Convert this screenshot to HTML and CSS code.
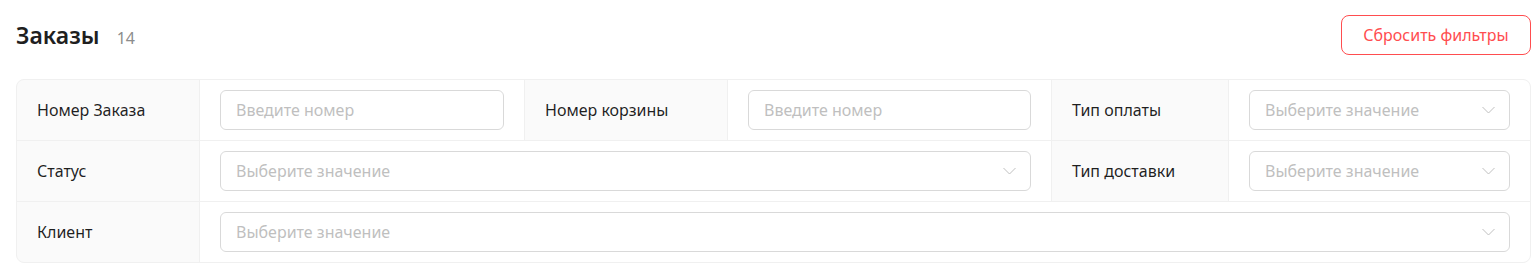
FILE: index.html
```html
<!DOCTYPE html>
<html lang="ru">
<head>
    <meta charset="UTF-8">
    <meta name="viewport" content="width=device-width, initial-scale=1.0">
    <title>Заказы</title>
    <link rel="stylesheet" href="styles.css">
</head>
<body>
    <div class="page">
        <div class="header">
            <h1 class="title">Заказы <span class="count">14</span></h1>
            <button class="reset-btn">Сбросить фильтры</button>
        </div>

        <div class="filters">
            <div class="label">Номер Заказа</div>
            <div class="field"><div class="input placeholder">Введите номер</div></div>
            <div class="label">Номер корзины</div>
            <div class="field"><div class="input placeholder">Введите номер</div></div>
            <div class="label">Тип оплаты</div>
            <div class="field">
                <div class="input select">
                    <span class="placeholder">Выберите значение</span>
                    <svg class="arrow" width="13" height="12" viewBox="0 0 13 12"><path d="M0.5 3 L6.5 9 L12.5 3" fill="none" stroke="currentColor" stroke-width="1"/></svg>
                </div>
            </div>

            <div class="label">Статус</div>
            <div class="field span-3">
                <div class="input select">
                    <span class="placeholder">Выберите значение</span>
                    <svg class="arrow" width="13" height="12" viewBox="0 0 13 12"><path d="M0.5 3 L6.5 9 L12.5 3" fill="none" stroke="currentColor" stroke-width="1"/></svg>
                </div>
            </div>
            <div class="label">Тип доставки</div>
            <div class="field">
                <div class="input select">
                    <span class="placeholder">Выберите значение</span>
                    <svg class="arrow" width="13" height="12" viewBox="0 0 13 12"><path d="M0.5 3 L6.5 9 L12.5 3" fill="none" stroke="currentColor" stroke-width="1"/></svg>
                </div>
            </div>

            <div class="label">Клиент</div>
            <div class="field span-5">
                <div class="input select">
                    <span class="placeholder">Выберите значение</span>
                    <svg class="arrow" width="13" height="12" viewBox="0 0 13 12"><path d="M0.5 3 L6.5 9 L12.5 3" fill="none" stroke="currentColor" stroke-width="1"/></svg>
                </div>
            </div>
        </div>
    </div>
</body>
</html>
```

FILE: styles.css
```css
* {
    margin: 0;
    padding: 0;
    box-sizing: border-box;
}
body {
    background: #fff;
    font-family: "Noto Sans", "Open Sans", sans-serif;
    color: rgba(0, 0, 0, 0.88);
}
.page {
    width: 1515px;
    margin-left: 16px;
    padding-top: 15px;
}
.header {
    display: flex;
    justify-content: space-between;
    align-items: center;
    height: 40px;
    margin-bottom: 24px;
}
.title {
    font-size: 23px;
    font-weight: 600;
    color: #1f1f1f;
    display: flex;
    align-items: baseline;
}
.count {
    font-size: 16px;
    font-weight: 400;
    color: #8c8c8c;
    margin-left: 17px;
}
.reset-btn {
    height: 40px;
    width: 190px;
    border: 1px solid #ff4d4f;
    border-radius: 8px;
    background: #fff;
    color: #ff4d4f;
    font-family: inherit;
    font-size: 16px;
}

.filters {
    display: grid;
    grid-template-columns: 182px 324px 202px 323px 176px 1fr;
    gap: 1px;
    background: #f0f0f0;
    border: 1px solid #f0f0f0;
    border-radius: 8px;
    overflow: hidden;
}
.label {
    background: #fafafa;
    padding: 0 20px;
    display: flex;
    align-items: center;
    font-size: 16px;
}
.field {
    background: #fff;
    padding: 10px 20px;
}
.span-3 {
    grid-column: span 3;
}
.span-5 {
    grid-column: span 5;
}
.input {
    height: 40px;
    border: 1px solid #d9d9d9;
    border-radius: 6px;
    padding: 0 14px 0 15px;
    display: flex;
    align-items: center;
    font-size: 16px;
}
.placeholder {
    color: #bfbfbf;
}
.select {
    justify-content: space-between;
}
.arrow {
    color: #bfbfbf;
}
```
